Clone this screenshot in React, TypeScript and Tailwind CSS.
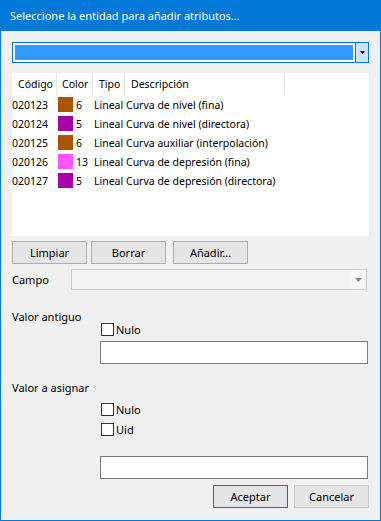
import React from 'react';

const rows = [
  { code: '020123', color: '#a85400', num: '6', tipo: 'Lineal', desc: 'Curva de nivel (fina)' },
  { code: '020124', color: '#a800a8', num: '5', tipo: 'Lineal', desc: 'Curva de nivel (directora)' },
  { code: '020125', color: '#a85400', num: '6', tipo: 'Lineal', desc: 'Curva auxiliar (interpolación)' },
  { code: '020126', color: '#ff54ff', num: '13', tipo: 'Lineal', desc: 'Curva de depresión (fina)' },
  { code: '020127', color: '#a800a8', num: '5', tipo: 'Lineal', desc: 'Curva de depresión (directora)' },
];

function Check({ label }: { label: string }) {
  return (
    <div className="flex items-center h-[13px] ml-[1px]">
      <span className="w-[13px] h-[13px] border border-[#333333] bg-white" />
      <span className="ml-[2px] leading-[13px]">{label}</span>
    </div>
  );
}

function Btn({ label, className = '' }: { label: string; className?: string }) {
  return (
    <button
      className={`w-[75px] h-[23px] border bg-[#e5e5e5] text-black flex items-center justify-center ${className}`}
    >
      {label}
    </button>
  );
}

export default function App() {
  return (
    <div
      className="w-[381px] h-[521px] border border-[#0078d7] bg-[#f0f0f0] flex flex-col text-[11px] text-black leading-[16px]"
      style={{ fontFamily: '"Noto Sans", "Liberation Sans", sans-serif' }}
    >
      <div className="h-[30px] bg-[#0078d7] text-white pl-[9px] flex items-center">
        Seleccione la entidad para añadir atributos...
      </div>

      <div className="flex flex-col px-[11px]">
        {/* entity combo */}
        <div className="mt-[11px] h-[21px] border border-[#0078d7] bg-white flex">
          <div className="flex-1 p-[2px]">
            <div className="h-full bg-[#3399ff]" />
          </div>
          <div className="w-[13px] bg-[#cce4f7] border-l border-[#0078d7] flex items-center justify-center">
            <svg width="5" height="3" viewBox="0 0 5 3">
              <path d="M0 0h5L2.5 3z" fill="#000" />
            </svg>
          </div>
        </div>

        {/* list */}
        <div className="mt-[10px] h-[163px] bg-white text-[10.5px]">
          <div className="flex h-[22px] items-center">
            <div className="w-[45px] h-full pl-[6px] flex items-center border-r border-[#e5e5e5]">Código</div>
            <div className="w-[36px] h-full pl-[5px] flex items-center border-r border-[#e5e5e5]">Color</div>
            <div className="w-[32px] h-full pl-[6px] flex items-center border-r border-[#e5e5e5]">Tipo</div>
            <div className="w-[160px] h-full pl-[6px] flex items-center border-r border-[#e5e5e5]">Descripción</div>
          </div>
          {rows.map((r) => (
            <div key={r.code} className="flex h-[19px] items-center whitespace-nowrap">
              <div className="w-[45px]">{r.code}</div>
              <div className="w-[36px] flex items-center pl-[1px]">
                <span className="w-[15px] h-[15px]" style={{ backgroundColor: r.color }} />
                <span className="ml-[3px]">{r.num}</span>
              </div>
              <div className="w-[32px] pl-[1px]">{r.tipo}</div>
              <div className="pl-[1px]">{r.desc}</div>
            </div>
          ))}
        </div>

        {/* action buttons */}
        <div className="mt-[5px] flex">
          <Btn label="Limpiar" className="border-[#adadad]" />
          <Btn label="Borrar" className="ml-[4px] border-[#adadad]" />
          <Btn label="Añadir..." className="ml-[7px] border-[#adadad]" />
        </div>

        {/* campo */}
        <div className="mt-[5px] flex items-center">
          <div className="w-[59px]">Campo</div>
          <div className="w-[296px] h-[21px] border border-[#cccccc] bg-[#f3f3f3] flex justify-end">
            <div className="w-[15px] bg-[#f7f7f7] flex items-center justify-center">
              <svg width="7" height="4" viewBox="0 0 7 4">
                <path d="M0 0h7L3.5 4z" fill="#8a8a8a" />
              </svg>
            </div>
          </div>
        </div>

        {/* valor antiguo */}
        <div className="mt-[19px] flex">
          <div className="w-[88px]">Valor antiguo</div>
          <div className="flex flex-col pt-[14px]">
            <Check label="Nulo" />
            <div className="mt-[5px] w-[268px] h-[23px] border border-[#7a7a7a] bg-white" />
          </div>
        </div>

        {/* valor a asignar */}
        <div className="mt-[16px] flex">
          <div className="w-[88px] whitespace-nowrap">Valor a asignar</div>
          <div className="flex flex-col pt-[23px]">
            <Check label="Nulo" />
            <div className="mt-[7px]">
              <Check label="Uid" />
            </div>
            <div className="mt-[20px] w-[268px] h-[23px] border border-[#7a7a7a] bg-white" />
          </div>
        </div>

        {/* footer buttons */}
        <div className="mt-[6px] flex justify-end">
          <Btn label="Aceptar" className="border-[#0078d7]" />
          <Btn label="Cancelar" className="ml-[6px] border-[#cccccc]" />
        </div>
      </div>
    </div>
  );
}
